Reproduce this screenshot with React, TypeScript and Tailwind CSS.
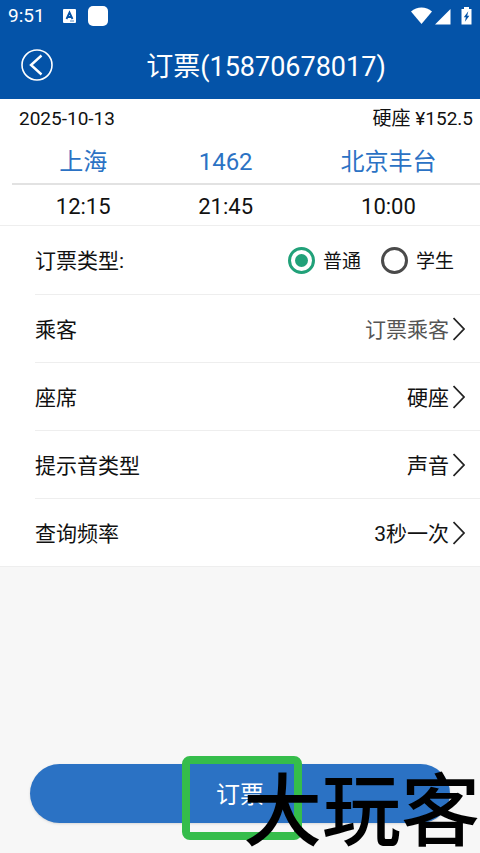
import React, { useState } from 'react';
import clsx from 'clsx';

const SETTINGS = [
  { label: '乘客', value: '订票乘客', muted: true },
  { label: '座席', value: '硬座', muted: false },
  { label: '提示音类型', value: '声音', muted: false },
  { label: '查询频率', value: '3秒一次', muted: false },
];

const TICKET_TYPES = ['普通', '学生'];

function StatusBar() {
  return (
    <div className="flex h-8 items-center justify-between px-2 text-white">
      <div className="flex items-center">
        <span className="text-[19px] leading-8">9:51</span>
        <svg className="ml-[18px] h-[14px] w-[13px]" viewBox="0 0 13 14" aria-hidden="true">
          <rect width="13" height="14" rx="1" fill="#fff" />
          <path d="M3.500 10 6.500 3.500 9.500 10M4.600 8h3.800" fill="none" stroke="#0453a8" strokeWidth="1.800" />
          <path d="M7 12h4" stroke="#0453a8" strokeWidth="0.700" />
        </svg>
        <span className="ml-3 h-5 w-5 rounded-[5px] bg-white" />
      </div>
      <svg className="h-[18px] w-[61px]" viewBox="0 0 61 18" aria-hidden="true">
        <path d="M0 4.500C6-.900 15-.900 21 4.500L10.500 17z" fill="#fff" />
        <path d="M24 17.500 39.500 2v15.500z" fill="#fff" />
        <path d="M53 0h5v2h2.500v15.500h-10V2H53z" fill="#fff" />
        <path d="M57.300 4.200 52.800 10.300h2.100l-1 4.500 4.500-6h-2.200z" fill="#0453a8" />
      </svg>
    </div>
  );
}

function Header() {
  return (
    <header className="bg-[#0453a8] text-white">
      <StatusBar />
      <div className="relative flex h-[67px] items-center justify-center pl-[52px]">
        <button type="button" aria-label="返回" className="absolute left-[21px] top-[17px]">
          <svg className="h-8 w-8" viewBox="0 0 32 32" fill="none" stroke="#fff" aria-hidden="true">
            <circle cx="16" cy="16" r="15" strokeWidth="1.600" />
            <path d="M20.500 6.500 10 16l10.500 9.500" strokeWidth="2.400" />
          </svg>
        </button>
        <h1 className="pt-0.5 text-[27px] leading-10">订票(15870678017)</h1>
      </div>
    </header>
  );
}

function TripInfo() {
  return (
    <section className="border-b border-[#eeeeee] bg-white text-[#111111]">
      <div className="flex h-10 items-center justify-between pl-[19px] pr-[7px] text-[19px]">
        <span>2025-10-13</span>
        <span>硬座 ¥152.5</span>
      </div>
      <div className="ml-3 grid h-[46px] grid-cols-[7fr_7fr_9fr] items-center border-b-2 border-[#e2e2e2] pt-0.5 text-center text-2xl text-[#2b72c4]">
        <span>上海</span>
        <span>1462</span>
        <span>北京丰台</span>
      </div>
      <div className="ml-3 grid h-10 grid-cols-[7fr_7fr_9fr] items-center pt-0.5 text-center text-[22px]">
        <span>12:15</span>
        <span>21:45</span>
        <span>10:00</span>
      </div>
    </section>
  );
}

function TicketTypeRow() {
  const [type, setType] = useState('普通');

  return (
    <div
      role="radiogroup"
      aria-labelledby="ticket-type-label"
      className="ml-[35px] flex h-[69px] items-center justify-between border-b border-[#eeeeee] pr-[26px]"
    >
      <span id="ticket-type-label" className="pt-1 text-[21px]">订票类型:</span>
      <div className="flex items-center gap-5">
        {TICKET_TYPES.map((name) => (
          <label key={name} className="flex items-center gap-2 text-[19px]">
            <input
              type="radio"
              name="ticket-type"
              value={name}
              checked={type === name}
              onChange={() => setType(name)}
              className="flex h-[27px] w-[27px] appearance-none items-center justify-center rounded-full border-3 border-[#4a4a4a] checked:border-[#21a179] checked:before:h-[13px] checked:before:w-[13px] checked:before:rounded-full checked:before:bg-[#21a179]"
            />
            <span className="pt-1">{name}</span>
          </label>
        ))}
      </div>
    </div>
  );
}

function SettingRow({ label, value, muted, last }: { label: string; value: string; muted: boolean; last: boolean }) {
  return (
    <button
      type="button"
      className={clsx(
        'flex h-[68px] items-center justify-between border-b border-[#eeeeee] pr-[15px] text-[21px]',
        last ? 'pl-[35px]' : 'ml-[35px]'
      )}
    >
      <span className="pt-1">{label}</span>
      <span className="flex items-center gap-1">
        <span className={clsx('pt-1', muted && 'text-[#555555]')}>{value}</span>
        <svg className="h-6 w-3" viewBox="0 0 12 24" fill="none" stroke="#222" strokeWidth="1.800" aria-hidden="true">
          <path d="M.500 1 11 12 .500 23" />
        </svg>
      </span>
    </button>
  );
}

export default function App() {
  return (
    <div className="flex min-h-screen flex-col overflow-hidden bg-[#f7f7f7] font-[Roboto,'Noto_Sans_CJK_SC',sans-serif]">
      <Header />
      <TripInfo />

      {/* --- Booking options --- */}
      <section className="flex flex-col bg-white text-[#111111]">
        <TicketTypeRow />
        {SETTINGS.map((item, i) => (
          <SettingRow key={item.label} {...item} last={i === SETTINGS.length - 1} />
        ))}
      </section>

      {/* --- Submit --- */}
      <footer className="relative mt-auto px-[30px] pb-[30px]">
        <button type="button" className="h-[59px] w-full rounded-full bg-[#2b72c4] pt-0.5 text-2xl text-white shadow-sm">
          订票
        </button>
        <div className="pointer-events-none absolute -top-2 left-1/2 ml-0.5 h-[84px] w-[120px] -translate-x-1/2 rounded-lg border-8 border-[#35bd4b]" />
        <span className="pointer-events-none absolute right-0 -bottom-2 whitespace-nowrap text-[79px] leading-24 font-medium text-black">
          大玩客
        </span>
      </footer>
    </div>
  );
}
